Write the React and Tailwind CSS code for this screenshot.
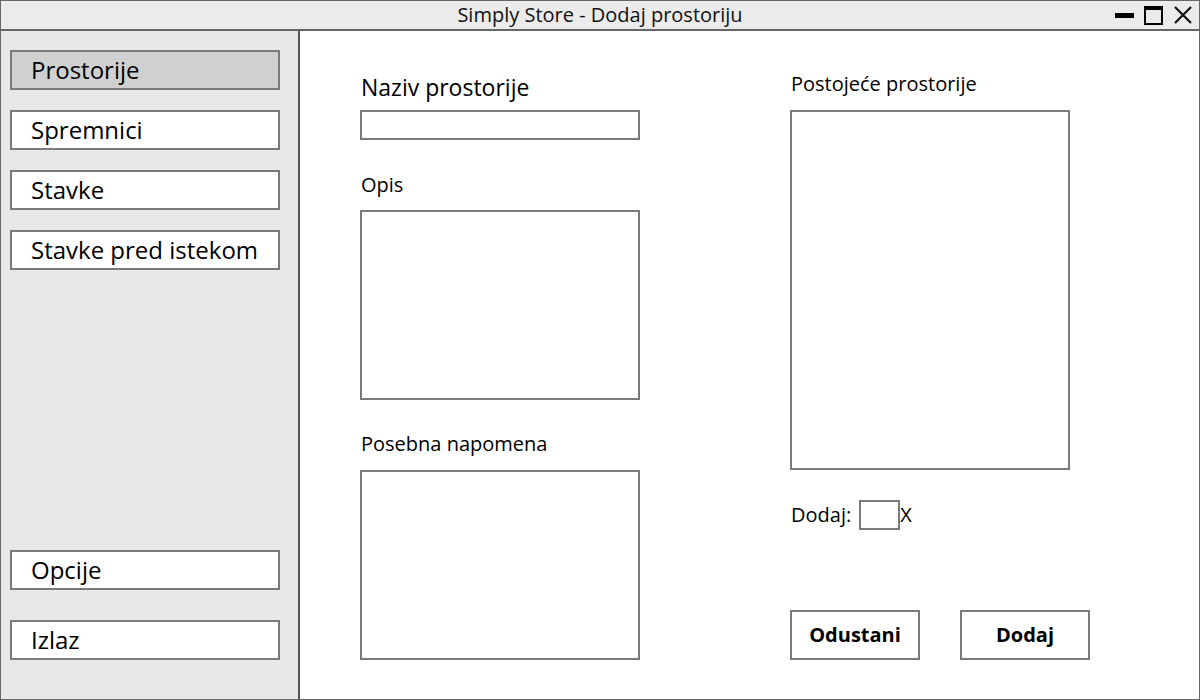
import React from 'react';

const navTop = ['Prostorije', 'Spremnici', 'Stavke', 'Stavke pred istekom'];
const navBottom = ['Opcije', 'Izlaz'];

const NavButton = ({ label, active }) => (
  <div
    className={`w-[270px] h-[40px] border-2 border-[#7a7a7a] flex items-center pl-[19px] text-[24px] text-black ${
      active ? 'bg-[#d0d0d0]' : 'bg-white'
    }`}
  >
    {label}
  </div>
);

const App = () => {
  return (
    <div
      className="w-[1200px] h-[700px] border border-[#666] flex flex-col bg-white overflow-hidden"
      style={{ fontFamily: '"Open Sans", "Noto Sans", sans-serif' }}
    >
      {/* Title bar */}
      <div className="h-[30px] shrink-0 bg-[#ebebeb] border-b-2 border-[#666] relative flex items-center justify-center">
        <span className="text-[20px] text-[#111]">Simply Store - Dodaj prostoriju</span>
        <div className="absolute right-[6px] top-0 h-full flex items-center gap-[10px]">
          <div className="w-[19px] h-[5px] bg-black mt-[1px]" />
          <div className="w-[19px] h-[19px] border-2 border-black border-t-[4px]" />
          <svg width="20" height="20" viewBox="0 0 20 20">
            <path d="M2 2 L18 18 M18 2 L2 18" stroke="#111" strokeWidth="2.2" />
          </svg>
        </div>
      </div>

      <div className="flex flex-1 min-h-0">
        {/* Sidebar */}
        <div className="w-[299px] shrink-0 bg-[#e8e8e8] border-r-2 border-[#555] flex flex-col pt-[19px] pl-[9px] pb-[39px]">
          <div className="flex flex-col gap-[20px]">
            {navTop.map((item, i) => (
              <NavButton key={item} label={item} active={i === 0} />
            ))}
          </div>
          <div className="mt-auto flex flex-col gap-[30px]">
            {navBottom.map(item => (
              <NavButton key={item} label={item} />
            ))}
          </div>
        </div>

        {/* Main */}
        <div className="flex-1 flex pl-[60px]">
          <div className="w-[280px] flex flex-col pt-[41px] text-black">
            <div className="h-[30px] leading-[30px] text-[23px] pl-[1px]">Naziv prostorije</div>
            <div className="mt-[8px] h-[30px] border-2 border-[#7a7a7a]" />
            <div className="mt-[33px] h-[24px] leading-[24px] text-[20px] pl-[1px]">Opis</div>
            <div className="mt-[13px] h-[190px] border-2 border-[#7a7a7a]" />
            <div className="mt-[32px] h-[24px] leading-[24px] text-[20px] pl-[1px]">Posebna napomena</div>
            <div className="mt-[14px] h-[190px] border-2 border-[#7a7a7a]" />
          </div>

          <div className="ml-[150px] w-[300px] flex flex-col pt-[41px] text-black">
            <div className="h-[24px] leading-[24px] text-[20px] pl-[1px]">Postojeće prostorije</div>
            <div className="mt-[14px] w-[280px] h-[360px] border-2 border-[#7a7a7a]" />
            <div className="mt-[30px] h-[30px] flex items-center text-[20px]">
              <span className="pl-[1px]">Dodaj:</span>
              <div className="ml-[8px] w-[41px] h-[30px] border-2 border-[#7a7a7a]" />
              <span>X</span>
            </div>
            <div className="mt-[80px] flex gap-[40px]">
              <div className="w-[130px] h-[50px] border-2 border-[#7a7a7a] flex items-center justify-center text-[20px] font-bold">
                Odustani
              </div>
              <div className="w-[130px] h-[50px] border-2 border-[#7a7a7a] flex items-center justify-center text-[20px] font-bold">
                Dodaj
              </div>
            </div>
          </div>
        </div>
      </div>
    </div>
  );
};

export default App;
